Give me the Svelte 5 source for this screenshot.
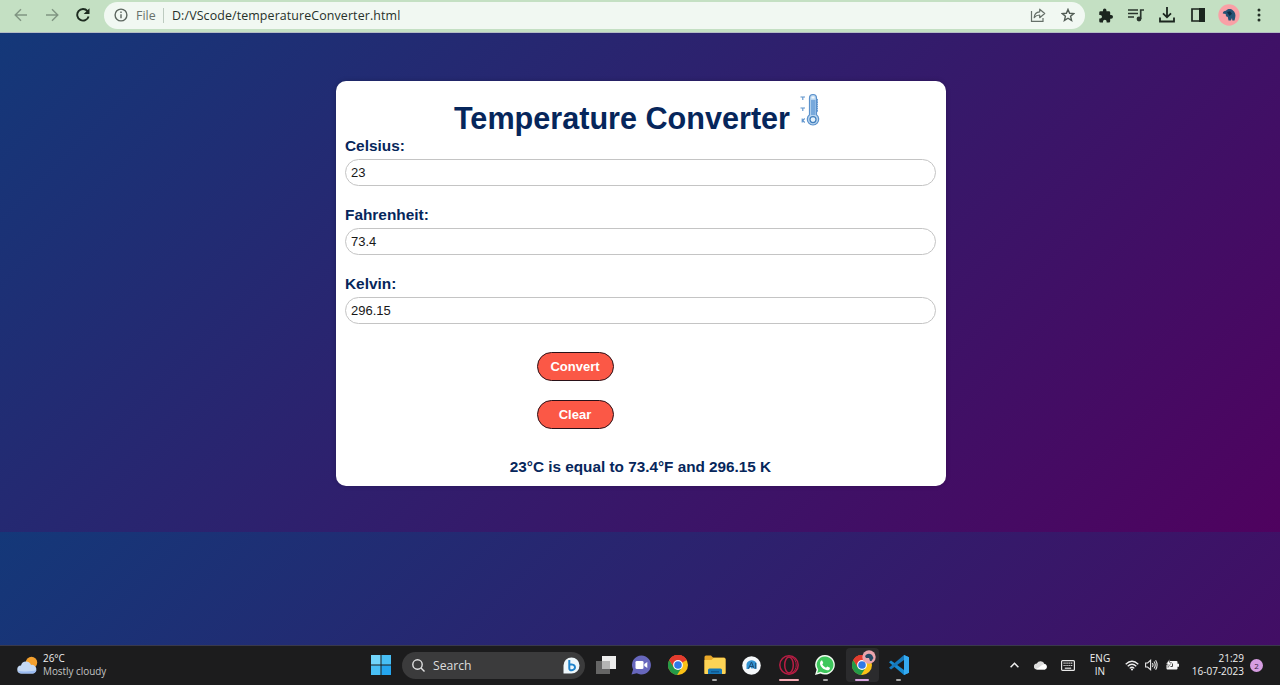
<script>
  let celsius = $state('23');
  let fahrenheit = $state('73.4');
  let kelvin = $state('296.15');
  let result = $state('23°C is equal to 73.4°F and 296.15 K');

  function convert() {
    const c = parseFloat(celsius);
    if (Number.isNaN(c)) return;
    const round = (n) => String(Math.round(n * 100) / 100);
    fahrenheit = round(c * 1.8 + 32);
    kelvin = round(c + 273.15);
    result = `${celsius}°C is equal to ${fahrenheit}°F and ${kelvin} K`;
  }

  function clear() {
    celsius = fahrenheit = kelvin = result = '';
  }
</script>

{#snippet chrome()}
  <circle cx="10" cy="10" r="10" fill="#fbc116" />
  <path d="M10 10 1.3 5A10 10 0 0 1 18.7 5Z" fill="#e33b2e" />
  <path d="M1.3 5A10 10 0 0 0 9 20L14 12.3 10 10 6 12.3Z" fill="#249a48" />
  <path d="M1.3 5 6 12.5 10 5.3H18.7A10 10 0 0 0 1.3 5Z" fill="#e33b2e" />
  <circle cx="10" cy="10" r="4.9" fill="#fff" />
  <circle cx="10" cy="10" r="3.8" fill="#3079e8" />
{/snippet}

<div class="screen">
  <header class="toolbar">
    <svg class="back" width="14" height="14" viewBox="0 0 14 14" fill="none" stroke="#809582" stroke-width="1.4"><path d="M13 7H1.5M7 1.2 1.2 7 7 12.8" /></svg>
    <svg class="forward" width="14" height="14" viewBox="0 0 14 14" fill="none" stroke="#809582" stroke-width="1.4"><path d="M1 7h11.5M7 1.2 12.8 7 7 12.8" /></svg>
    <svg class="reload" width="14" height="14" viewBox="0 0 14 14" fill="none" stroke="#1d2b20" stroke-width="1.9"><path d="M11.5 3.1A5.8 5.8 0 1 0 12.6 8.4" /><path d="M13.5.3v5.8H7.7Z" fill="#1d2b20" stroke="none" /></svg>
    <div class="address">
      <svg width="14" height="14" viewBox="0 0 14 14" fill="none" stroke="#5c665f" stroke-width="1.4"><circle cx="7" cy="7" r="5.9" /><path d="M7 6.2v4M7 3.5v1.4" /></svg>
      <span class="scheme">File</span>
      <span class="rule"></span>
      <span class="url">D:/VScode/temperatureConverter.html</span>
      <svg class="share" width="16" height="14" viewBox="0 0 16 14" fill="none" stroke="#667069" stroke-width="1.2"><path d="M1.500 3v10.300h11.500v-3.300" /><path d="M4.200 9.700C4.400 6 6.700 3.900 9.700 3.800V1.200l5 4.300-5 4.200V7C7.300 7 5.500 8 4.200 9.700Z" stroke-linejoin="round" /></svg>
      <svg class="star" width="14" height="14" viewBox="0 0 14 14" fill="none" stroke="#525d55" stroke-width="1.4"><path d="m7 1.400 1.600 3.900 4.200.3-3.200 2.700 1 4.100L7 10.200l-3.600 2.200 1-4.100L1.200 5.600l4.200-.3Z" /></svg>
    </div>
    <svg class="puzzle" width="15" height="15" viewBox="0 0 24 24" fill="#1b251e"><path d="M21 11h-1.500V7a2 2 0 0 0-2-2h-4V3.500a2.800 2.800 0 0 0-5.600 0V5H4a2 2 0 0 0-2 2v4h1.500a2.900 2.900 0 0 1 0 5.800H2V21a2 2 0 0 0 2 2h4v-1.500a2.900 2.900 0 0 1 5.800 0V23h3.700a2 2 0 0 0 2-2v-4H21a3 3 0 0 0 0-6Z" /></svg>
    <svg class="media" width="16" height="14" viewBox="0 0 16 14" fill="none" stroke="#29342c" stroke-width="1.700"><path d="M0 2h10M0 5.500h10M0 9h6M12.700 11V2H16" /><circle cx="11" cy="11" r="2.400" fill="#29342c" stroke="none" /></svg>
    <svg class="download" width="16" height="16" viewBox="0 0 16 16" fill="none" stroke="#1b251e" stroke-width="1.800"><path d="M8 0v10M4 6.300l4 4 4-4M1 10.500v4h14v-4" /></svg>
    <svg class="panel" width="14" height="14" viewBox="0 0 14 14"><path d="M1 1h12v12H1Z" fill="none" stroke="#1b251e" stroke-width="1.700" /><path d="M8 0h6v14H8Z" fill="#1b251e" /></svg>
    <svg class="avatar" width="22" height="22" viewBox="0 0 22 22"><circle cx="11" cy="11" r="10.700" fill="#f9a0a6" /><path d="M4.800 9.500Q5 7 8 6.800C9.500 4.500 13 4.700 15 6.500c2 1.500 2.800 4 2.300 6.500l-.8 3.500h-2.200L14 14l-1.200 2.500h-2.300L9.800 13 8 12.200 7.700 10Z" fill="#255274" /><path d="m9 8 3-.8 2 2.500-2.500 2.300Z" fill="#102c45" /></svg>
    <svg class="more" width="4" height="14" viewBox="0 0 4 14" fill="#243027"><circle cx="2" cy="2" r="1.500" /><circle cx="2" cy="7" r="1.500" /><circle cx="2" cy="12" r="1.500" /></svg>
  </header>

  <main>
    <section class="card">
      <h1>
        <span>Temperature Converter</span>
        <svg width="22" height="34" viewBox="0 0 22 34" fill="none" stroke="#5b91cb">
          <path d="M10.500 5a3.500 3.500 0 0 1 7 0v16.800a5.700 5.700 0 1 1-7 0Z" fill="#b9d5ef" stroke-width="1.200" />
          <path d="M12 7h4.500v15H12Z" fill="#78a9dc" stroke="none" />
          <path d="M12.500 4.500h3" stroke="#f2f8fd" stroke-width="2" />
          <circle cx="14" cy="26.600" r="3" fill="#e5f2fc" stroke="#427fbd" stroke-width="1.200" />
          <path d="M18 6v13" stroke-width="1.800" stroke-dasharray="1.700 .5" />
          <path d="M1.500 4h1.700M6 4H3.800v3M1.500 15h1.700M6 15H3.800v3M3.200 25.500v4M5.700 25.500l-2 2 2 2" stroke-width="1.100" />
        </svg>
      </h1>
      <label for="celsius">Celsius:</label>
      <input id="celsius" bind:value={celsius} />
      <label for="fahrenheit">Fahrenheit:</label>
      <input id="fahrenheit" bind:value={fahrenheit} />
      <label for="kelvin">Kelvin:</label>
      <input id="kelvin" bind:value={kelvin} />
      <div class="buttons">
        <button onclick={convert}>Convert</button>
        <button onclick={clear}>Clear</button>
      </div>
      <p>{result}</p>
    </section>
  </main>

  <footer class="taskbar">
    <div class="weather">
      <svg width="21" height="18" viewBox="0 0 21 18"><circle cx="14.500" cy="6.500" r="5.700" fill="#f3a02e" /><path d="M4.500 17.500a4 4 0 0 1-.5-8 5.200 5.200 0 0 1 10-.5 4.300 4.300 0 0 1 2 8.500Z" fill="#c5d9f4" /><path d="M1 14.500c2 1.200 14 1.500 18.500-.5-.5 2.300-2 3.500-3.500 3.500H4.500c-2 0-3-1.400-3.500-3Z" fill="#9abaf0" /></svg>
      <div><b>26°C</b><span>Mostly cloudy</span></div>
    </div>
    <div class="apps">
      <svg class="windows" width="20" height="20" viewBox="0 0 20 20"><path d="M0 0h9.500v9.500H0Z" fill="#72d5fb" /><path d="M10.500 0H20v9.500h-9.500ZM0 10.500h9.500V20H0Z" fill="#48bff5" /><path d="M10.500 10.500H20V20h-9.500Z" fill="#24a5ee" /></svg>
      <div class="search">
        <svg width="13" height="13" viewBox="0 0 13 13" fill="none" stroke="#e2e2e2" stroke-width="1.400"><circle cx="5.500" cy="5.500" r="4.700" /><path d="m9 9 3.500 3.500" /></svg>
        <span>Search</span>
        <svg width="17" height="17" viewBox="0 0 17 17"><path d="M8.500.5a8 8 0 1 1 0 16H.5v-8a8 8 0 0 1 8-8Z" fill="#eef7fb" /><path d="M6.300 3v8.300c0 1.500 1.200 2.300 2.500 2 2.300-.5 3.800-2 3-4-.6-1.600-2.300-2-5.500-2" fill="none" stroke="#1f83cc" stroke-width="2" /></svg>
      </div>
      <svg class="tasks" width="20" height="18" viewBox="0 0 20 18"><path d="M0 5h14v13H0Z" fill="#656565" /><path d="M6 0h14v13H6Z" fill="#ededed" /><path d="M6 5h8v8H6Z" fill="#b5b5b5" /></svg>
      <div class="slot">
        <svg width="20" height="20" viewBox="0 0 20 20"><path d="M10.500.5a9.500 9.500 0 1 1-4.700 17.800L.5 19.500l1.600-5A9.500 9.500 0 0 1 10.500.5Z" fill="#6767bd" /><rect x="4.500" y="6" width="8" height="8" rx="1.300" fill="#fff" /><path d="m13.300 9 3-2v6l-3-2Z" fill="#fff" /></svg>
      </div>
      <div class="slot"><svg width="20" height="20" viewBox="0 0 20 20">{@render chrome()}</svg></div>
      <div class="slot">
        <svg width="22" height="20" viewBox="0 0 22 20"><path d="M.5 2Q.5.500 2 .5h5l2 2H20q1.500 0 1.500 1.500v14q0 1-1 1H.5Z" fill="#e9a829" /><path d="M.5 5h7l2-2H20q1.500 0 1.500 1.500V18q0 1-1 1H1.500q-1 0-1-1Z" fill="#fdd456" /><path d="M4 19v-4q0-1.500 1.500-1.500h11q1.500 0 1.500 1.500v4Z" fill="#1677b7" /><path d="M7 16h8v1.500H7Z" fill="#11588f" /></svg>
        <i class="dot"></i>
      </div>
      <div class="slot">
        <svg width="19" height="19" viewBox="0 0 19 19"><circle cx="9.500" cy="9.500" r="9.300" fill="#f5f8fa" /><path d="M4.500 13V8c1.500-4.500 7.500-5 10-1v6h-2l-1-2-1.500 2-1.500-2L7 13Z" fill="#3293d2" /><path d="m6.500 12.500 3-6.500 2.500 6.500M8 10.500h3M13.700 7v5.500" fill="none" stroke="#1f4b72" stroke-width="1" /></svg>
      </div>
      <div class="slot">
        <svg width="20" height="20" viewBox="0 0 20 20" fill="none" stroke="#b91d44"><circle cx="10" cy="10" r="9.200" stroke-width="1.500" /><ellipse cx="10" cy="10" rx="4.300" ry="8" stroke-width="1.500" /><path d="M12 1.700c7 3 7 13.600 0 16.600" /></svg>
        <i class="dot wide pink"></i>
      </div>
      <div class="slot">
        <svg width="20" height="20" viewBox="0 0 20 20"><path d="M10.200 0a9.800 9.800 0 1 1-4.700 18.500L0 20l1.600-5.200A9.800 9.800 0 0 1 10.200 0Z" fill="#f1fbf1" /><path d="M10.200 1.500a8.300 8.300 0 1 1-4.500 15.300L2.200 18l1-3.500a8.300 8.300 0 0 1 7-13Z" fill="#3ec75c" /><path d="M7 5.200 8.300 8l-1 1.300c1 1.800 2 2.700 3.700 3.400l1.200-1.300 2.800 1.300c0 2-1.600 2.700-3 2.500-3.700-.6-6.700-3.500-7-6.700 0-1.500.7-2.900 2-3.300Z" fill="#fff" /></svg>
        <i class="dot"></i>
      </div>
      <div class="slot active">
        <svg width="20" height="20" viewBox="0 0 20 20">{@render chrome()}</svg>
        <svg class="badge" width="14" height="14" viewBox="0 0 14 14"><circle cx="7" cy="7" r="6.700" fill="#eba4ac" /><path d="M3 6q3-4 7-1l1.500 3-2 3H8L7 8H4Z" fill="#254a66" /></svg>
        <i class="dot wide violet"></i>
      </div>
      <div class="slot">
        <svg width="20" height="20" viewBox="0 0 20 20"><path d="m15 0 5 2.300v15.400L15 20 0 7.300 2 5.500 15 15Z" fill="#178bd1" /><path d="M15 0v5L2 14.500l-2-1.800Z" fill="#1678bb" /><path d="m15 0 5 2.300v15.400L15 20Z" fill="#35aaf1" /></svg>
        <i class="dot"></i>
      </div>
    </div>
    <div class="tray">
      <svg class="up" width="9" height="6" viewBox="0 0 9 6" fill="none" stroke="#f0f0f0" stroke-width="1.500"><path d="m.6 5.200 3.900-4 3.900 4" /></svg>
      <svg class="cloud" width="14" height="10" viewBox="0 0 14 10"><path d="M3 9.500a3 3 0 0 1-.2-6A4.200 4.200 0 0 1 10.500 4a2.900 2.900 0 0 1 .5 5.500Z" fill="#ddd" /><path d="M2 9c3-1 5-4 8.500-5A2.900 2.900 0 0 1 11 9.500H3Z" fill="#fff" /></svg>
      <svg class="keys" width="14" height="11" viewBox="0 0 14 11" fill="none" stroke="#e8e8e8" stroke-width="1.200"><rect x=".6" y=".6" width="12.800" height="9.800" rx="1" /><path d="M2.500 3.200h9M2.500 5.500h9" stroke-dasharray="1.200 .7" /><path d="M3.800 8.200h6.400" /></svg>
      <div class="lang"><span>ENG</span><span>IN</span></div>
      <svg class="wifi" width="14" height="11" viewBox="0 0 14 11" fill="none" stroke="#eee" stroke-width="1.300"><path d="M.7 4.200q6.300-6 12.600 0M2.700 6.300q4.300-4 8.600 0M4.700 8.400q2.300-2.200 4.600 0" /><circle cx="7" cy="9.600" r="1" fill="#fff" stroke="none" /></svg>
      <svg class="sound" width="13" height="12" viewBox="0 0 13 12" fill="none" stroke="#e6e6e6" stroke-width="1.100"><path d="M.6 4h2l3-2.700v9.400L2.600 8h-2ZM7.300 4.200q1.500 1.800 0 3.600M9 2.500q2.500 3.500 0 7M10.600 1.200q3 4.800 0 9.600" /></svg>
      <svg class="battery" width="14" height="12" viewBox="0 0 14 12"><path d="M5 2h6.500q1 0 1 1v1.700H14v3.100h-1.500v1.700q0 1-1 1H2.500q-1 0-1-1V6Z" fill="#f5f5f5" /><path d="M1 5 4.500.5v3h2L3 8.500V5Z" fill="#fff" stroke="#333" stroke-width=".5" /><path d="M7.500 4.500v3M7.500 7.500h-2" stroke="#444" /></svg>
      <div class="clock"><span>21:29</span><span>16-07-2023</span></div>
      <span class="count">2</span>
    </div>
  </footer>
</div>

<style>
  :global(body) { margin: 0; overflow: hidden; }
  * { box-sizing: border-box; }
  svg { display: block; flex: none; }
  .screen { width: 1280px; height: 685px; display: flex; flex-direction: column; font-family: 'Liberation Sans', Arial, sans-serif; }

  .toolbar { height: 33px; flex: none; display: flex; align-items: center; padding: 0 18px 2px 14px; background: #c4e0c3; border-bottom: 1px solid #b4bdc4; }
  .forward { margin-left: 17px; }
  .reload { margin-left: 17px; }
  .address { width: 981px; height: 27px; margin-left: 14px; padding: 0 10px; border-radius: 14px; background: #f1f8f2; display: flex; align-items: center; font: 12.4px 'Open Sans', 'Noto Sans', sans-serif; }
  .scheme { margin-left: 8px; width: 20px; color: #68716b; }
  .rule { width: 1px; height: 15px; margin: 0 8px 0 7px; background: #bdcbc0; }
  .url { color: #26312a; white-space: nowrap; letter-spacing: .12px; }
  .share { margin-left: auto; }
  .star { margin-left: 15px; }
  .puzzle { margin-left: 13px; }
  .media { margin-left: 15px; }
  .download { margin-left: 15px; }
  .panel { margin-left: 16px; }
  .avatar { margin-left: 13px; }
  .more { margin-left: 17px; }

  main { height: 612px; flex: none; display: flex; justify-content: center; align-items: flex-start; padding: 48px 0 0 1px; background: linear-gradient(135deg, #143879, #4f025f) 0 0 / 100% 499px; }
  .card { width: 610px; height: 405px; padding: 0 9.500px; border-radius: 10px; background: #fff; color: #06265b; display: flex; flex-direction: column; box-shadow: 0 0 5px #0003; }
  h1 { height: 56px; margin: 0; display: flex; justify-content: center; align-items: flex-start; gap: 9px; font-size: 30.6px; line-height: 36px; white-space: nowrap; }
  h1 span { padding-top: 19px; }
  h1 svg { margin: 12px 6px 0 0; }
  label { font-size: 15.4px; line-height: 18px; font-weight: bold; }
  input { width: 591px; height: 27px; margin: 4px 0 20px; padding: 0 5px 1px; border: 1px solid #c4c4c4; border-radius: 14px; background: #fff; color: #171717; font: 13px 'Liberation Sans', Arial, sans-serif; outline: none; }
  .buttons { display: flex; flex-direction: column; gap: 19px; margin: 8px 0 0 191.500px; }
  button { width: 77px; height: 29px; padding: 0; border: 1.500px solid #2a1118; border-radius: 15px; background: #fb5846; color: #fff; font: bold 13px 'Liberation Sans', Arial, sans-serif; }
  p { margin: 29px 0 0; text-align: center; font-size: 15.300px; line-height: 18px; font-weight: bold; }

  .taskbar { height: 40px; flex: none; display: flex; align-items: center; padding-bottom: 1px; background: #1c1c1d; border-top: 1px solid #39394b; color: #efefef; font-family: 'Open Sans', 'Noto Sans', sans-serif; }
  .weather { width: 371px; display: flex; align-items: center; gap: 5px; padding-left: 17px; font-size: 9.9px; line-height: 13px; }
  .weather div { display: flex; flex-direction: column; }
  .weather b { font-weight: 500; }
  .weather span { color: #c4c4c4; }
  .apps { display: flex; align-items: center; }
  .search { width: 183px; height: 27px; margin: 0 11px; padding: 0 5px 0 10px; border-radius: 14px; background: #3b3b3c; display: flex; align-items: center; gap: 8px; font-size: 12.200px; color: #dedede; }
  .search svg:last-child { margin-left: auto; }
  .tasks { margin-right: 7px; }
  .slot { position: relative; width: 36.8px; height: 36px; display: flex; justify-content: center; align-items: center; }
  .active::before { content: ''; position: absolute; inset: 1px 2px; border-radius: 4px; background: #2b2b2d; }
  .active svg { position: relative; }
  .active .badge { position: absolute; left: 18px; top: 3px; }
  .dot { position: absolute; bottom: 2px; left: 50%; width: 5px; height: 2px; margin-left: -2.500px; border-radius: 1px; background: #aaa; }
  .wide { width: 14px; margin-left: -7px; }
  .pink { width: 20px; margin-left: -10px; background: #f4a9b3; }
  .violet { background: #d9a6df; }
  .tray { margin-left: auto; padding-right: 17px; display: flex; align-items: center; font-size: 10px; line-height: 13px; }
  .cloud { margin-left: 15px; }
  .keys { margin-left: 13px; }
  .lang { width: 22px; margin-left: 14px; display: flex; flex-direction: column; align-items: center; }
  .wifi { margin-left: 14px; }
  .sound { margin-left: 6px; }
  .battery { margin-left: 7px; }
  .clock { width: 58px; margin-left: 7px; display: flex; flex-direction: column; align-items: flex-end; white-space: nowrap; }
  .count { width: 13px; height: 13px; margin-left: 6px; border-radius: 50%; background: #d69de1; color: #37213b; font-size: 8px; text-align: center; }
</style>
